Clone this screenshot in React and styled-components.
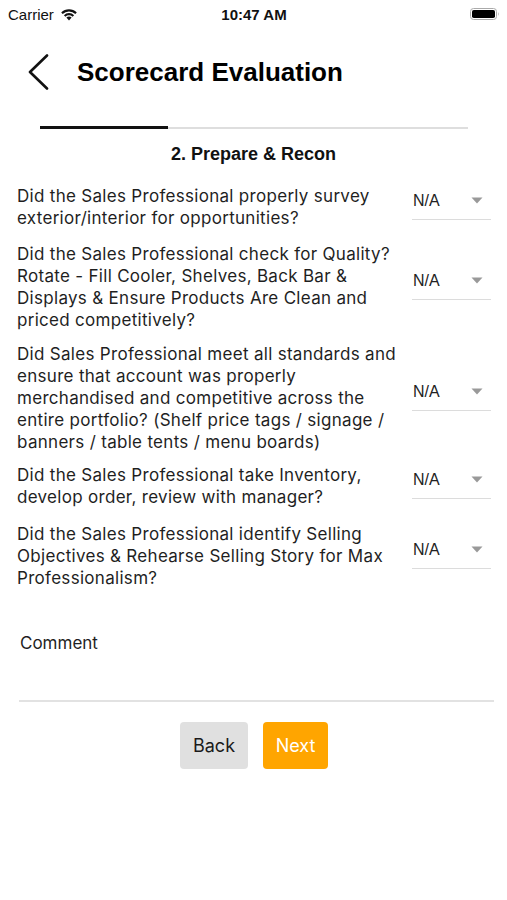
import React from "react";
import styled, { createGlobalStyle } from "styled-components";

const Global = createGlobalStyle`
  html, body { margin: 0; padding: 0; background: #fff; }
  body { font-family: "Liberation Sans", Arial, sans-serif; color: #1c1c1c; }
  * { box-sizing: border-box; }
`;

const Screen = styled.div`
  width: 507px;
  height: 900px;
  background: #fff;
  display: flex;
  flex-direction: column;
`;

const StatusBar = styled.div`
  height: 28px;
  padding: 0 7px 0 8px;
  display: grid;
  grid-template-columns: 1fr auto 1fr;
  align-items: center;
  font-size: 15px;
  color: #111;
`;

const StatusLeft = styled.div`
  display: flex;
  align-items: center;
  gap: 6px;
`;

const Time = styled.div`
  font-weight: 700;
  font-size: 15px;
`;

const StatusRight = styled.div`
  display: flex;
  justify-content: flex-end;
`;

const Header = styled.div`
  height: 56px;
  margin-top: 16px;
  display: flex;
  align-items: center;
  padding-left: 27px;
  gap: 28px;
`;

const Title = styled.h1`
  margin: 0;
  font-size: 26px;
  font-weight: 700;
  color: #000;
`;

const Progress = styled.div`
  margin: 26px 39px 0 40px;
  height: 3px;
  display: flex;
  align-items: center;
`;

const Track = styled.div`
  flex: 1;
  height: 2px;
  background: #dedede;
  display: flex;
  align-items: center;
`;

const Fill = styled.div`
  height: 3px;
  background: #111;
`;

const SectionTitle = styled.h2`
  margin: 15px 0 0;
  text-align: center;
  font-size: 18px;
  font-weight: 700;
  color: #111;
`;

const Questions = styled.div`
  margin-top: 20px;
  display: flex;
  flex-direction: column;
  padding: 0 16px 0 17px;
`;

const QRow = styled.div`
  display: grid;
  grid-template-columns: 1fr 79px;
  column-gap: 10px;
  align-items: center;
  margin-top: ${(p) => p.$gap}px;
`;

const QText = styled.div`
  font-family: Inter, "Liberation Sans", sans-serif;
  font-size: 17px;
  line-height: 22px;
  letter-spacing: 0.3px;
  color: #1f1f1f;
  white-space: pre-line;
`;

const Select = styled.div`
  height: 38px;
  margin-top: -12px;
  border-bottom: 1px solid #dcdcdc;
  display: flex;
  align-items: center;
  justify-content: space-between;
  padding: 0 8px 0 1px;
  font-size: 16px;
  color: #222;
`;

const Comment = styled.div`
  margin: 43px 13px 0 19px;
  height: 70px;
  border-bottom: 2px solid #e2e2e2;
  padding: 1px 0 0 1px;
  font-family: Inter, "Liberation Sans", sans-serif;
  font-size: 17px;
  color: #1f1f1f;
`;

const Buttons = styled.div`
  margin-top: 20px;
  display: flex;
  justify-content: center;
  gap: 15px;
  padding-left: 1px;
`;

const Button = styled.button`
  height: 47px;
  width: ${(p) => p.$w}px;
  border: none;
  border-radius: 4px;
  font-family: Inter, "Liberation Sans", sans-serif;
  font-size: 18px;
  background: ${(p) => (p.$primary ? "#ffa500" : "#e0e0e0")};
  color: ${(p) => (p.$primary ? "#fff" : "#1a1a1a")};
`;

const Caret = () => (
  <svg width="12" height="7" viewBox="0 0 12 7">
    <path d="M0.5 0.5 L11.5 0.5 L6 6.5 Z" fill="#999" />
  </svg>
);

const questions = [
  { gap: 0, text: "Did the Sales Professional properly survey\nexterior/interior for opportunities?" },
  { gap: 14, text: "Did the Sales Professional check for Quality?\nRotate - Fill Cooler, Shelves, Back Bar &\nDisplays & Ensure Products Are Clean and\npriced competitively?" },
  { gap: 12, text: "Did Sales Professional meet all standards and\nensure that account was properly\nmerchandised and competitive across the\nentire portfolio? (Shelf price tags / signage /\nbanners / table tents / menu boards)" },
  { gap: 11, text: "Did the Sales Professional take Inventory,\ndevelop order, review with manager?" },
  { gap: 15, text: "Did the Sales Professional identify Selling\nObjectives & Rehearse Selling Story for Max\nProfessionalism?" },
];

export default function App() {
  return (
    <Screen>
      <Global />
      <StatusBar>
        <StatusLeft>
          <span>Carrier</span>
          <svg width="18" height="13" viewBox="0 0 18 13">
            <path d="M9 12.5 L6.4 9.6 A3.8 3.8 0 0 1 11.6 9.6 Z" fill="#111" />
            <path d="M3.9 7.2 A7.3 7.3 0 0 1 14.1 7.2 L12.6 8.7 A5.2 5.2 0 0 0 5.4 8.7 Z" fill="#111" />
            <path d="M1.2 4.5 A11 11 0 0 1 16.8 4.5 L15.3 6 A8.9 8.9 0 0 0 2.7 6 Z" fill="#111" />
          </svg>
        </StatusLeft>
        <Time>10:47 AM</Time>
        <StatusRight>
          <svg width="30" height="12" viewBox="0 0 30 12">
            <rect x="0.5" y="0.5" width="26" height="11" rx="3" fill="none" stroke="#aaa" />
            <rect x="2" y="2" width="23" height="8" rx="1.8" fill="#000" />
            <path d="M28 4 Q29.5 6 28 8 Z" fill="#aaa" />
          </svg>
        </StatusRight>
      </StatusBar>
      <Header>
        <svg width="22" height="36" viewBox="0 0 22 36">
          <path d="M20 1.5 L3 18 L20 34.5" fill="none" stroke="#111" strokeWidth="2.6" strokeLinecap="round" strokeLinejoin="round" />
        </svg>
        <Title>Scorecard Evaluation</Title>
      </Header>
      <Progress>
        <Track>
          <Fill style={{ width: "30%" }} />
        </Track>
      </Progress>
      <SectionTitle>2. Prepare &amp; Recon</SectionTitle>
      <Questions>
        {questions.map((q, i) => (
          <QRow key={i} $gap={q.gap}>
            <QText>{q.text}</QText>
            <Select>
              <span>N/A</span>
              <Caret />
            </Select>
          </QRow>
        ))}
      </Questions>
      <Comment>Comment</Comment>
      <Buttons>
        <Button $w={68}>Back</Button>
        <Button $w={65} $primary>Next</Button>
      </Buttons>
    </Screen>
  );
}
